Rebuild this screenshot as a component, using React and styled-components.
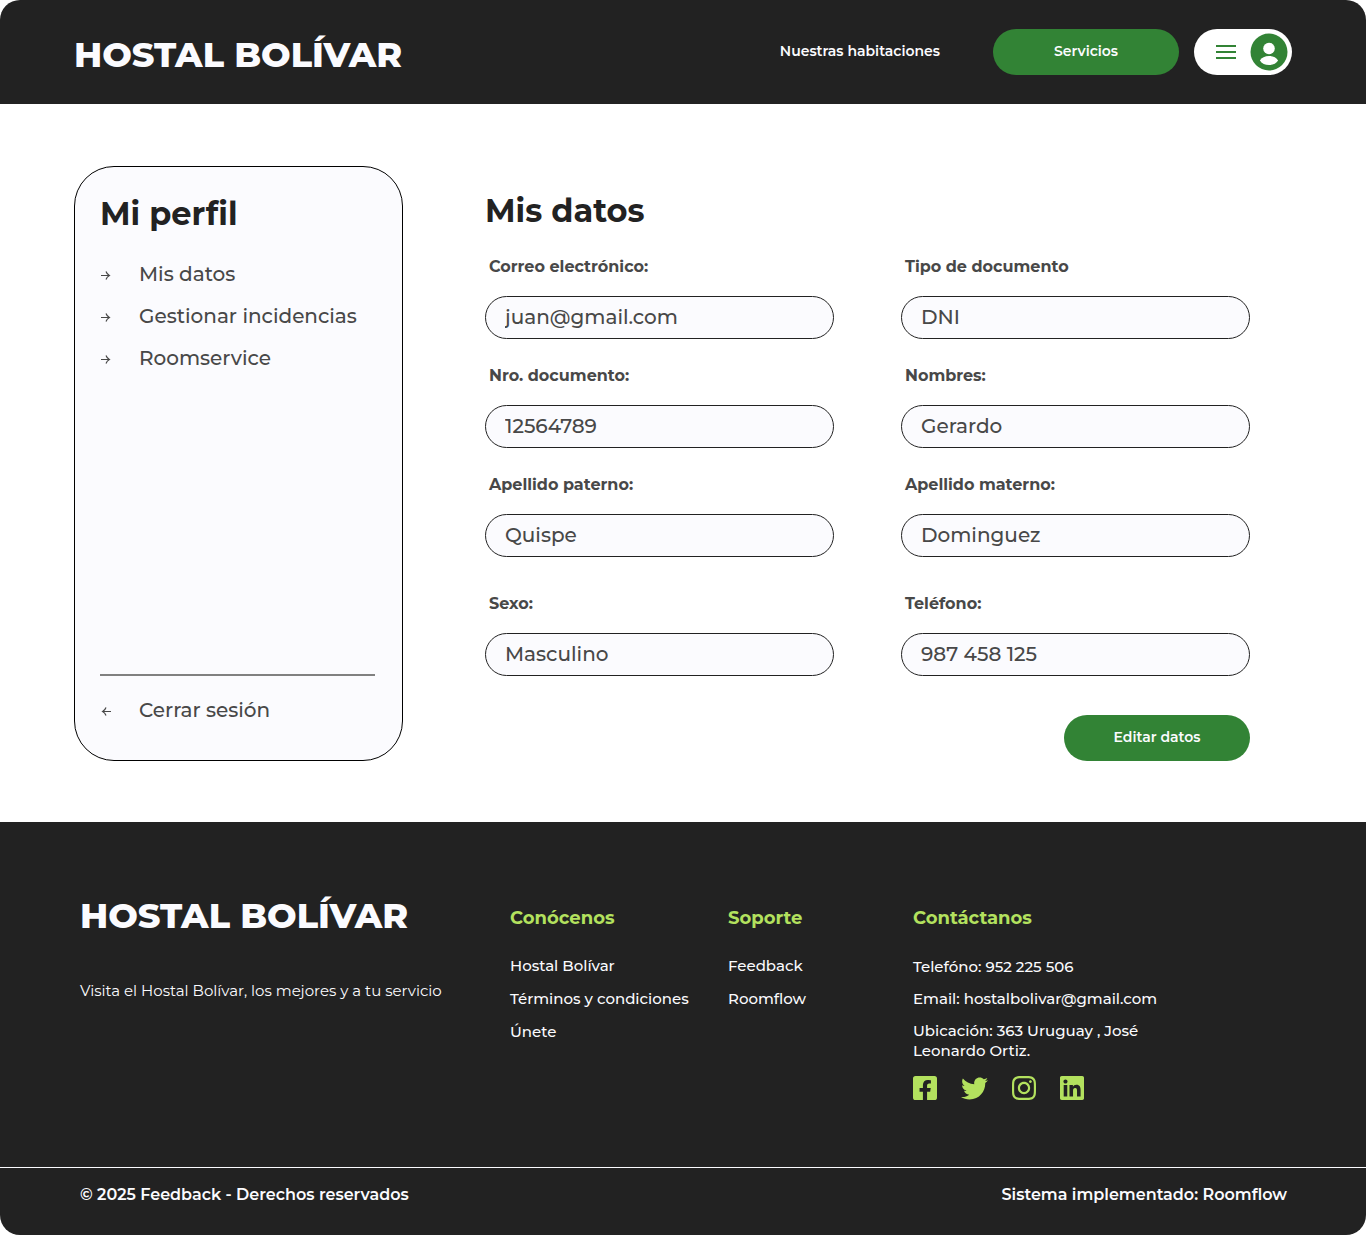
import React from 'react';
import styled, { createGlobalStyle } from 'styled-components';
import { FaFacebookSquare, FaTwitter, FaInstagram, FaLinkedin } from 'react-icons/fa';

const GlobalStyle = createGlobalStyle`
  *, *::before, *::after { box-sizing: border-box; }
  body {
    margin: 0;
    background: #fff;
    color: #222;
    font-family: Montserrat, Inter, sans-serif;
  }
  h1, h2, h3, p, ul { margin: 0; padding: 0; }
  ul { list-style: none; }
  a { color: inherit; text-decoration: none; }
  button, input { font-family: inherit; }
`;

const Header = styled.header`
  display: flex;
  align-items: center;
  justify-content: space-between;
  height: 104px;
  padding: 0 74px;
  background: #222;
  border-radius: 20px 20px 0 0;
`;

const Brand = styled.p`
  color: #fbfbfe;
  font-size: 35px;
  font-weight: 800;
  line-height: 44px;
  white-space: nowrap;
`;

const HeaderBrand = styled(Brand)`
  padding-top: 6px;
`;

const Nav = styled.nav`
  display: flex;
  align-items: center;
  gap: 15px;
`;

const NavLink = styled.a`
  margin-right: 38px;
  padding-bottom: 2px;
  color: #fbfbfe;
  font-size: 14px;
  font-weight: 600;
  line-height: 20px;
`;

const PillButton = styled.button`
  width: 186px;
  height: 46px;
  padding: 0 0 2px;
  border: 0;
  border-radius: 23px;
  background: #328335;
  color: #fbfbfe;
  font-size: 14px;
  font-weight: 600;
  cursor: pointer;
`;

const AccountButton = styled.button`
  display: flex;
  align-items: center;
  justify-content: flex-end;
  gap: 14px;
  width: 98px;
  height: 46px;
  padding: 0 4px 0 0;
  border: 0;
  border-radius: 23px;
  background: #fff;
  cursor: pointer;
`;

const Main = styled.main`
  display: flex;
  gap: 82px;
  padding: 62px 116px 61px 74px;
`;

const ProfileCard = styled.aside`
  display: flex;
  flex-direction: column;
  flex: 0 0 329px;
  padding: 27px 27px 38px 25px;
  border: 1px solid #000;
  border-radius: 40px;
  background: #fbfbfe;
`;

const Heading = styled.h1`
  font-size: 32px;
  font-weight: 700;
  line-height: 40px;
`;

const MenuList = styled.ul`
  display: flex;
  flex-direction: column;
  flex: 1;
  gap: 18px;
  padding-top: 28px;
`;

const MenuLink = styled.a`
  display: flex;
  align-items: center;
  gap: 28px;
  padding-left: 1px;
  color: #484848;
  font-size: 20px;
  font-weight: 500;
  line-height: 24px;
  white-space: nowrap;
`;

const SessionArea = styled.div`
  padding-top: 22px;
  border-top: 2px solid #808080;
`;

const DataForm = styled.form`
  flex: 1;
  display: flex;
  flex-direction: column;
  padding-top: 25px;
`;

const FieldGrid = styled.div`
  display: grid;
  grid-template-columns: 1fr 1fr;
  gap: 27px 67px;
  margin-top: ${({ $top }) => $top}px;
`;

const Field = styled.div`
  display: flex;
  flex-direction: column;
  gap: 19px;
  min-width: 0;
`;

const Label = styled.label`
  padding-left: 4px;
  color: #484848;
  font-size: 16px;
  font-weight: 700;
  line-height: 20px;
`;

const TextBox = styled.input`
  width: 100%;
  height: 43px;
  padding: 0 19px 2px;
  border: 1px solid #222;
  border-radius: 22px;
  background: #fbfbfe;
  color: #484848;
  font-size: 20px;
  font-weight: 500;
`;

const Actions = styled.div`
  display: flex;
  justify-content: flex-end;
  margin-top: 39px;
`;

const Footer = styled.footer`
  background: #222;
  color: #fbfbfe;
  border-radius: 0 0 20px 20px;
`;

const FooterGrid = styled.div`
  display: grid;
  grid-template-columns: 430px 218px 185px 260px;
  padding: 72px 79px 67px 80px;
`;

const FooterColumn = styled.div`
  padding-top: 12px;
`;

const Tagline = styled.p`
  padding-top: 43px;
  font-size: 15px;
  font-weight: 400;
  line-height: 20px;
`;

const FooterTitle = styled.h2`
  color: #b3e15e;
  font-size: 18px;
  font-weight: 700;
  line-height: 24px;
`;

const FooterList = styled.ul`
  display: flex;
  flex-direction: column;
  gap: 13px;
  padding-top: 26px;
  font-size: 15px;
  font-weight: 500;
  line-height: 20px;
`;

const ContactList = styled(FooterList)`
  gap: 12px;
  padding-top: 27px;
`;

const Socials = styled.div`
  display: flex;
  justify-content: space-between;
  width: 171px;
  padding-top: 15px;
  color: #b3e15e;
`;

const SocialLink = styled.a`
  display: flex;
  justify-content: center;
  align-items: center;
  height: 24px;
`;

const Legal = styled.div`
  display: flex;
  justify-content: space-between;
  padding: 17px 79px 30px 80px;
  border-top: 1px solid #fbfbfe;
  font-size: 16px;
  font-weight: 600;
  line-height: 20px;
`;

const Arrow = ({ back }) => (
  <svg width="10" height="12" viewBox="0 0 10 12" fill="none" stroke="#484848" strokeWidth="1.2" aria-hidden="true">
    {back ? (
      <path d="M10 7.500H1.600M5 3.500Q4.200 6 1.600 7.500Q4.200 9 5 11.500" />
    ) : (
      <path d="M0 7.500H8.400M5 3.500Q5.800 6 8.400 7.500Q5.800 9 5 11.500" />
    )}
  </svg>
);

const MenuIcon = () => (
  <svg width="20" height="14" viewBox="0 0 20 14" fill="#328335" aria-hidden="true">
    <path d="M0 0h20v2H0zM0 6h20v2H0zM0 12h20v2H0z" />
  </svg>
);

const UserIcon = () => (
  <svg width="38" height="38" viewBox="0 0 38 38" aria-hidden="true">
    <circle cx="19" cy="19" r="18.500" fill="#328335" />
    <circle cx="19" cy="15.500" r="5.800" fill="#fff" />
    <path d="M9.900 27.500C11.500 24.600 15 23 19 23s7.500 1.600 9.100 4.500C26.300 30.500 22.900 32 19 32s-7.300-1.500-9.100-4.500z" fill="#fff" />
  </svg>
);

const menuItems = ['Mis datos', 'Gestionar incidencias', 'Roomservice'];

const personalFields = [
  { id: 'correo', label: 'Correo electrónico:', value: 'juan@gmail.com', type: 'email' },
  { id: 'tipo', label: 'Tipo de documento', value: 'DNI' },
  { id: 'documento', label: 'Nro. documento:', value: '12564789' },
  { id: 'nombres', label: 'Nombres:', value: 'Gerardo' },
  { id: 'paterno', label: 'Apellido paterno:', value: 'Quispe' },
  { id: 'materno', label: 'Apellido materno:', value: 'Dominguez' },
];

const extraFields = [
  { id: 'sexo', label: 'Sexo:', value: 'Masculino' },
  { id: 'telefono', label: 'Teléfono:', value: '987 458 125', type: 'tel' },
];

const squareBox = '0 32 448 448';

const socials = [
  { name: 'Facebook', Icon: FaFacebookSquare, size: 24, viewBox: squareBox },
  { name: 'Twitter', Icon: FaTwitter, size: 27, viewBox: '0 0 512 512' },
  { name: 'Instagram', Icon: FaInstagram, size: 24, viewBox: squareBox },
  { name: 'LinkedIn', Icon: FaLinkedin, size: 24, viewBox: squareBox },
];

const Fields = ({ items, top }) => (
  <FieldGrid $top={top}>
    {items.map(({ id, label, value, type = 'text' }) => (
      <Field key={id}>
        <Label htmlFor={id}>{label}</Label>
        <TextBox id={id} type={type} defaultValue={value} />
      </Field>
    ))}
  </FieldGrid>
);

export default function App() {
  return (
    <>
      <GlobalStyle />
      <Header>
        <HeaderBrand>HOSTAL BOLÍVAR</HeaderBrand>
        <Nav>
          <NavLink href="#habitaciones">Nuestras habitaciones</NavLink>
          <PillButton type="button">Servicios</PillButton>
          <AccountButton type="button" aria-label="Cuenta">
            <MenuIcon />
            <UserIcon />
          </AccountButton>
        </Nav>
      </Header>
      <Main>
        <ProfileCard>
          <Heading as="h2">Mi perfil</Heading>
          <MenuList>
            {menuItems.map((item) => (
              <li key={item}>
                <MenuLink href="#perfil"><Arrow />{item}</MenuLink>
              </li>
            ))}
          </MenuList>
          <SessionArea>
            <MenuLink href="#salir"><Arrow back />Cerrar sesión</MenuLink>
          </SessionArea>
        </ProfileCard>
        <DataForm>
          <Heading>Mis datos</Heading>
          <Fields items={personalFields} top={26} />
          <Fields items={extraFields} top={37} />
          <Actions>
            <PillButton type="button">Editar datos</PillButton>
          </Actions>
        </DataForm>
      </Main>
      <Footer>
        <FooterGrid>
          <div>
            <Brand>HOSTAL BOLÍVAR</Brand>
            <Tagline>Visita el Hostal Bolívar, los mejores y a tu servicio</Tagline>
          </div>
          <FooterColumn>
            <FooterTitle>Conócenos</FooterTitle>
            <FooterList>
              <li><a href="#hostal">Hostal Bolívar</a></li>
              <li><a href="#terminos">Términos y condiciones</a></li>
              <li><a href="#unete">Únete</a></li>
            </FooterList>
          </FooterColumn>
          <FooterColumn>
            <FooterTitle>Soporte</FooterTitle>
            <FooterList>
              <li><a href="#feedback">Feedback</a></li>
              <li><a href="#roomflow">Roomflow</a></li>
            </FooterList>
          </FooterColumn>
          <FooterColumn>
            <FooterTitle>Contáctanos</FooterTitle>
            <ContactList>
              <li>Telefóno: 952 225 506</li>
              <li>Email: hostalbolivar@gmail.com</li>
              <li>Ubicación: 363 Uruguay , José Leonardo Ortiz.</li>
            </ContactList>
            <Socials>
              {socials.map(({ name, Icon, size, viewBox }) => (
                <SocialLink key={name} href="#redes" aria-label={name}>
                  <Icon size={size} viewBox={viewBox} />
                </SocialLink>
              ))}
            </Socials>
          </FooterColumn>
        </FooterGrid>
        <Legal>
          <p>© 2025 Feedback - Derechos reservados</p>
          <p>Sistema implementado: Roomflow</p>
        </Legal>
      </Footer>
    </>
  );
}
